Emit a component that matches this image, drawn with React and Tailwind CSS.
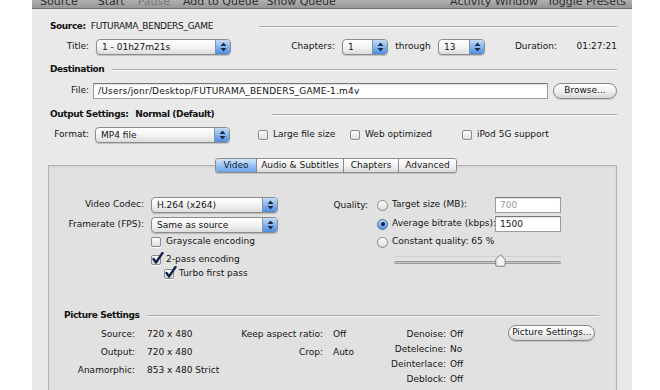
import React from 'react'

function Arrows() {
    return (
        <svg width="7" height="10" viewBox="0 0 7 10">
            <path d="M3.5 0.5 L6.5 4 H0.5 Z M3.5 9.5 L6.5 6 H0.5 Z" fill="#1c2b48" />
        </svg>
    )
}

function Popup({ className, text }) {
    return (
        <div className={`${className} flex h-[16px] shrink-0 items-stretch overflow-hidden rounded-[4px] border border-[#8c8c8c] bg-linear-to-b from-white via-[#f4f4f4] to-[#dcdcdc] shadow-[0_1px_1px_rgba(0,0,0,0.18)]`}>
            <span className="flex-1 truncate pl-[5px] leading-[14px] text-[#111]">{text}</span>
            <span className="flex w-[15px] items-center justify-center border-l border-[#7f93b5] bg-linear-to-b from-[#c4dcf8] via-[#87b4ec] to-[#4d8ce0]">
                <Arrows />
            </span>
        </div>
    )
}

function Check({ checked, label }) {
    return (
        <div className="flex items-center">
            <span className="relative h-[10px] w-[10px] shrink-0 rounded-[2px] border border-[#8a8a8a] bg-linear-to-b from-white to-[#dedede] shadow-[0_1px_0_rgba(255,255,255,0.8)]">
                {checked && (
                    <svg className="absolute -top-[4px] left-[0px]" width="12" height="13" viewBox="0 0 12 13">
                        <path d="M1.5 7 L4 10.5 L10.5 1" stroke="#16244a" strokeWidth="2.4" fill="none" strokeLinecap="round" strokeLinejoin="round" />
                    </svg>
                )}
            </span>
            <span className="ml-[5px] text-[#151515]">{label}</span>
        </div>
    )
}

function Radio({ on, label, className }) {
    return (
        <div className={`${className} flex items-center`}>
            {on ? (
                <span className="flex h-[11px] w-[11px] shrink-0 items-center justify-center rounded-full border border-[#4a6ea8] bg-linear-to-b from-[#b9d5f7] to-[#4f8de0]">
                    <span className="h-[4px] w-[4px] rounded-full bg-[#14213d]" />
                </span>
            ) : (
                <span className="h-[11px] w-[11px] shrink-0 rounded-full border border-[#8a8a8a] bg-linear-to-b from-white to-[#dcdcdc]" />
            )}
            <span className="ml-[4px] text-[#151515]">{label}</span>
        </div>
    )
}

function Line({ className }) {
    return <div className={`${className} h-[2px] flex-1 border-t border-[#a9a9a9] border-b border-b-[#f8f8f8]`} />
}

function Field({ value, dim }) {
    return (
        <div className={`h-[16px] w-[66px] shrink-0 border border-[#9c9c9c] border-t-[#777] bg-white pl-[4px] leading-[14px] shadow-[inset_0_1px_1px_rgba(0,0,0,0.12)] ${dim ? 'text-[#9a9a9a]' : 'text-[#111]'}`}>
            {value}
        </div>
    )
}

function Tab({ label, active, className }) {
    return (
        <div className={`${className} flex h-full items-center justify-center border-r border-[#8c8c8c] last:border-r-0 ${active ? 'bg-linear-to-b from-[#d3e6fb] via-[#9cc4f1] to-[#6ea6ea] text-[#0c1a33]' : 'bg-linear-to-b from-white via-[#f3f3f3] to-[#dadada] text-[#151515]'}`}>
            {label}
        </div>
    )
}

export default function App() {
    return (
        <div className="flex h-[390px] w-[660px] items-start overflow-hidden whitespace-nowrap bg-white font-['DejaVu_Sans',sans-serif] text-[9px]">
            <div className="h-full w-[32px] shrink-0 bg-white" />
            <div className="flex h-full w-[600px] shrink-0 flex-col overflow-hidden bg-[#e9e9e9]">
                {/* toolbar, mostly scrolled off the top */}
                <div className="flex h-[9px] shrink-0 items-end overflow-hidden border-b border-[#6f6f6f] bg-linear-to-b from-[#b0b0b0] to-[#979797] text-[11px] leading-[11px] text-[#2e2e2e]">
                    <div className="mb-[1px] flex w-full">
                        <span className="ml-[8px]">Source</span>
                        <span className="ml-[20px]">Start</span>
                        <span className="ml-[13px] text-[#777]">Pause</span>
                        <span className="ml-[13px]">Add to Queue</span>
                        <span className="ml-[8px]">Show Queue</span>
                        <span className="ml-auto">Activity Window</span>
                        <span className="ml-[9px] mr-[6px]">Toggle Presets</span>
                    </div>
                </div>

                <div className="flex shrink-0 flex-col pl-[18px] pr-[15px]">
                    {/* source */}
                    <div className="mt-[11px] flex h-[14px] items-center">
                        <span className="font-bold tracking-[-0.4px] text-[#111]">Source:</span>
                        <span className="ml-[5px] tracking-[-0.3px] text-[#151515]">FUTURAMA_BENDERS_GAME</span>
                        <Line className="ml-[46px]" />
                    </div>

                    <div className="mt-[4px] flex h-[18px] items-center">
                        <span className="w-[39px] text-right text-[#151515]">Title:</span>
                        <Popup className="ml-[7px] w-[135px]" text="1 - 01h27m21s" />
                        <span className="w-[104px] text-right text-[#151515]">Chapters:</span>
                        <Popup className="ml-[7px] w-[46px]" text="1" />
                        <span className="w-[50px] text-center text-[#151515]">through</span>
                        <Popup className="w-[47px]" text="13" />
                        <span className="w-[72px] text-right text-[#151515]">Duration:</span>
                        <span className="flex-1 text-right text-[#151515]">01:27:21</span>
                    </div>

                    {/* destination */}
                    <div className="mt-[7px] flex h-[14px] items-center">
                        <span className="font-bold tracking-[-0.4px] text-[#111]">Destination</span>
                        <Line className="ml-[8px]" />
                    </div>

                    <div className="mt-[5px] flex h-[17px] items-center">
                        <span className="w-[39px] text-right text-[#151515]">File:</span>
                        <div className="ml-[4px] h-[16px] flex-1 border border-[#9c9c9c] border-t-[#777] bg-white pl-[4px] leading-[14px] tracking-[0.2px] text-[#111] shadow-[inset_0_1px_1px_rgba(0,0,0,0.12)]">
                            /Users/jonr/Desktop/FUTURAMA_BENDERS_GAME-1.m4v
                        </div>
                        <div className="ml-[5px] flex h-[16px] w-[64px] shrink-0 items-center justify-center rounded-full border border-[#888] bg-linear-to-b from-white via-[#f2f2f2] to-[#d6d6d6] text-[#151515] shadow-[0_1px_1px_rgba(0,0,0,0.15)]">
                            Browse...
                        </div>
                    </div>

                    {/* output settings */}
                    <div className="mt-[9px] flex h-[14px] items-center">
                        <span className="font-bold tracking-[-0.4px] text-[#111]">Output Settings:</span>
                        <span className="ml-[7px] font-bold tracking-[-0.4px] text-[#111]">Normal (Default)</span>
                        <Line className="ml-[58px]" />
                    </div>

                    <div className="mt-[4px] flex h-[17px] items-center">
                        <span className="w-[39px] text-right text-[#151515]">Format:</span>
                        <Popup className="ml-[6px] w-[135px]" text="MP4 file" />
                        <div className="ml-[28px] w-[92px]"><Check label="Large file size" /></div>
                        <div className="w-[112px]"><Check label="Web optimized" /></div>
                        <div><Check label="iPod 5G support" /></div>
                    </div>

                    {/* tabs */}
                    <div className="relative z-10 mt-[15px] flex h-[15px] justify-center pr-[5px]">
                        <div className="ml-[10px] flex h-[15px] overflow-hidden rounded-[3px] border border-[#8c8c8c] shadow-[0_1px_1px_rgba(0,0,0,0.15)]">
                            <Tab className="w-[41px]" label="Video" active />
                            <Tab className="w-[87px]" label="Audio & Subtitles" />
                            <Tab className="w-[55px]" label="Chapters" />
                            <Tab className="w-[57px]" label="Advanced" />
                        </div>
                    </div>

                    <div className="-ml-[2px] -mt-[8px] flex h-[240px] shrink-0 flex-col border border-[#b3b3b3] bg-[#e1e1e1] pt-[31px] shadow-[inset_0_1px_2px_rgba(0,0,0,0.08)]">
                        <div className="flex">
                            {/* video column */}
                            <div className="flex w-[280px] flex-col">
                                <div className="flex h-[16px] items-center">
                                    <span className="w-[95px] text-right text-[#151515]">Video Codec:</span>
                                    <Popup className="ml-[7px] w-[127px]" text="H.264 (x264)" />
                                </div>
                                <div className="mt-[4px] flex h-[16px] items-center">
                                    <span className="w-[95px] text-right text-[#151515]">Framerate (FPS):</span>
                                    <Popup className="ml-[7px] w-[127px]" text="Same as source" />
                                </div>
                                <div className="ml-[102px] mt-[3px] flex h-[12px] items-center">
                                    <Check label="Grayscale encoding" />
                                </div>
                                <div className="ml-[102px] mt-[6px] flex h-[12px] items-center">
                                    <Check label="2-pass encoding" checked />
                                </div>
                                <div className="ml-[115px] mt-[2px] flex h-[12px] items-center">
                                    <Check label="Turbo first pass" checked />
                                </div>
                            </div>

                            {/* quality column */}
                            <div className="flex">
                                <span className="h-[16px] w-[39px] text-right leading-[16px] text-[#151515]">Quality:</span>
                                <div className="ml-[9px] flex flex-col">
                                    <div className="flex h-[16px] items-center">
                                        <Radio className="w-[118px]" label="Target size (MB):" />
                                        <Field value="700" dim />
                                    </div>
                                    <div className="mt-[3px] flex h-[16px] items-center">
                                        <Radio className="w-[118px]" on label="Average bitrate (kbps):" />
                                        <Field value="1500" />
                                    </div>
                                    <div className="mt-[3px] flex h-[14px] items-center">
                                        <Radio label="Constant quality: 65 %" />
                                    </div>
                                    <div className="relative ml-[17px] mt-[4px] flex h-[14px] w-[167px] flex-col justify-center">
                                        <div className="h-px w-full bg-[#cfcfcf]" />
                                        <div className="mt-[4px] h-[3px] w-full rounded-full border border-[#9a9a9a] bg-[#c4c4c4]" />
                                        <svg className="absolute left-[101px] top-[1px]" width="11" height="13" viewBox="0 0 11 13">
                                            <path d="M5.5 0.8 L10.2 5.5 V11 Q10.2 12.2 9 12.2 H2 Q0.8 12.2 0.8 11 V5.5 Z" fill="#f4f4f4" stroke="#7d7d7d" strokeWidth="1" />
                                        </svg>
                                    </div>
                                </div>
                            </div>
                        </div>

                        {/* picture settings */}
                        <div className="ml-[15px] mr-[17px] mt-[29px] flex h-[14px] items-center">
                            <span className="font-bold tracking-[-0.4px] text-[#111]">Picture Settings</span>
                            <Line className="ml-[8px]" />
                        </div>

                        <div className="flex">
                            <div className="mt-[3px] flex w-[330px] flex-col text-[#151515]">
                                <div className="flex h-[18px] items-center">
                                    <span className="w-[86px] text-right">Source:</span>
                                    <span className="ml-[12px] w-[92px]">720 x 480</span>
                                    <span className="w-[84px] text-right">Keep aspect ratio:</span>
                                    <span className="ml-[10px]">Off</span>
                                </div>
                                <div className="flex h-[18px] items-center">
                                    <span className="w-[86px] text-right">Output:</span>
                                    <span className="ml-[12px] w-[92px]">720 x 480</span>
                                    <span className="w-[84px] text-right">Crop:</span>
                                    <span className="ml-[10px]">Auto</span>
                                </div>
                                <div className="flex h-[18px] items-center">
                                    <span className="w-[86px] text-right">Anamorphic:</span>
                                    <span className="ml-[12px]">853 x 480 Strict</span>
                                </div>
                            </div>
                            <div className="mt-[4px] flex flex-col text-[#151515]">
                                {[['Denoise:', 'Off'], ['Detelecine:', 'No'], ['Deinterlace:', 'Off'], ['Deblock:', 'Off'], ['Decomb:', 'Off']].map(([k, v]) => (
                                    <div key={k} className="flex h-[15px] items-center">
                                        <span className="w-[67px] text-right">{k}</span>
                                        <span className="ml-[4px]">{v}</span>
                                    </div>
                                ))}
                            </div>
                            <div className="ml-[45px] mt-[2px] flex h-[16px] w-[87px] items-center justify-center rounded-full border border-[#888] bg-linear-to-b from-white via-[#f2f2f2] to-[#d6d6d6] text-[#151515] shadow-[0_1px_1px_rgba(0,0,0,0.15)]">
                                Picture Settings...
                            </div>
                        </div>
                    </div>
                </div>
            </div>
            <div className="h-full flex-1 bg-white" />
        </div>
    )
}
